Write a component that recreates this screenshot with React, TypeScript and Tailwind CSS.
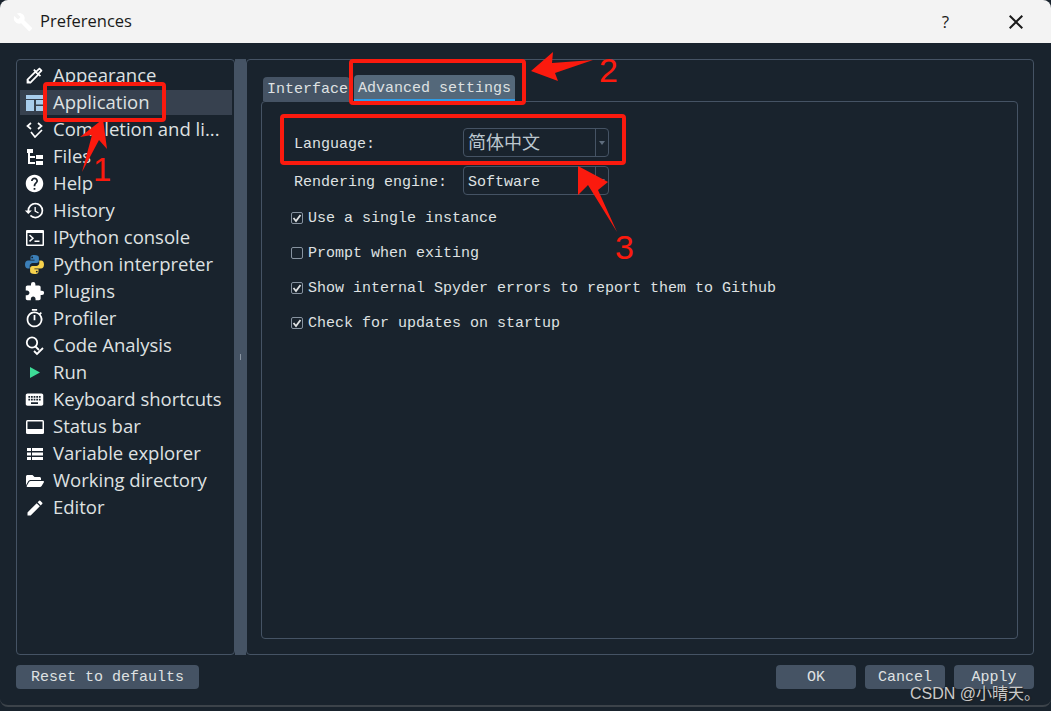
import type { ReactNode } from 'react'
import {
  MdOutlineColorize,
  MdHelp,
  MdHistory,
  MdExtension,
  MdOutlineTimer,
  MdKeyboard,
  MdEdit,
  MdClose,
} from 'react-icons/md'
import { FaFolderOpen } from 'react-icons/fa'

// Iconos a mano, los que el paquete no trae igual
const WrenchIcon = () => (
  <svg width="20" height="20" viewBox="0 0 24 24" fill="#ffffff">
    <path d="M22.7 19l-9.100-9.100c.9-2.300.4-5-1.500-6.900-2-2-5-2.400-7.400-1.300L9 6 6 9 1.600 4.700C.4 7.100.9 10.100 2.900 12.100c1.900 1.900 4.600 2.400 6.900 1.500l9.100 9.100c.4.400 1 .4 1.400 0l2.300-2.300c.5-.4.5-1.100.1-1.400z" />
  </svg>
)

const ApplicationIcon = () => (
  <svg width="18" height="16" viewBox="0 0 18 16" fill="#a9cdec">
    <rect x="0" y="0" width="18" height="4" />
    <rect x="0" y="5" width="8" height="11" />
    <rect x="10" y="5" width="8" height="4.5" />
    <rect x="10" y="11" width="8" height="5" />
  </svg>
)

const CompletionIcon = () => (
  <svg width="18" height="16" viewBox="0 0 18 16" fill="none" stroke="#fff" strokeWidth="1.7">
    <path d="M5 1 1.5 4 5 7" />
    <path d="M12 1 15.5 4 12 7" />
    <path d="M5 10 9 15 16 8" />
  </svg>
)

const FilesIcon = () => (
  <svg width="18" height="16" viewBox="0 0 18 16" fill="#fff">
    <rect x="1" y="0" width="6" height="4" />
    <rect x="2" y="4" width="2" height="11" />
    <rect x="2" y="7" width="7" height="2" />
    <rect x="2" y="13" width="7" height="2" />
    <rect x="10" y="6" width="7" height="4" />
    <rect x="10" y="12" width="7" height="4" />
  </svg>
)

const ConsoleIcon = () => (
  <svg width="18" height="16" viewBox="0 0 18 16">
    <rect x="0" y="0" width="18" height="16" rx="1" fill="#fff" />
    <rect x="1.5" y="3" width="15" height="11.5" fill="#19232d" />
    <path d="M3.5 5 7 8.2 3.5 11.4" fill="none" stroke="#fff" strokeWidth="1.5" />
    <rect x="8.5" y="10.5" width="5" height="1.5" fill="#fff" />
  </svg>
)

const PythonIcon = () => (
  <svg width="19" height="19" viewBox="0 0 19 19">
    <path d="M9.3 0C6 0 5.5 1.3 5.5 2.7V4.8H9.6V5.5H3C1.3 5.5 0 6.9 0 9.4c0 2.6 1.2 4 2.9 4H4.7v-2.3c0-1.6 1.4-3 3-3h3.9c1.3 0 2.3-1 2.3-2.3V2.7C13.900 1 12.500 0 9.300 0Z" fill="#3b7fb8" />
    <circle cx="7.200" cy="2.400" r=".9" fill="#19232d" />
    <path d="M9.700 19c3.300 0 3.800-1.300 3.800-2.700v-2.100H9.400v-.7H16c1.700 0 3-1.400 3-3.900 0-2.600-1.200-4-2.900-4H14.300v2.300c0 1.600-1.400 3-3 3H7.400c-1.300 0-2.300 1-2.300 2.300v3.100C5.100 18 6.500 19 9.700 19Z" fill="#f7d24c" />
    <circle cx="11.800" cy="16.600" r=".9" fill="#19232d" />
  </svg>
)

const AnalysisIcon = () => (
  <svg width="20" height="20" viewBox="0 0 20 20" fill="none" stroke="#fff" strokeWidth="1.8">
    <circle cx="7" cy="6.500" r="5.200" />
    <path d="M10.500 10.500 14 14" />
    <path d="M9 15 12 18 18 12" />
  </svg>
)

const RunIcon = () => (
  <svg width="12" height="13" viewBox="0 0 12 13" fill="#3ddc97">
    <path d="M1 1 11 6.500 1 12Z" />
  </svg>
)

const StatusIcon = () => (
  <svg width="18" height="14" viewBox="0 0 18 14">
    <rect x="0" y="0" width="18" height="14" rx="1.500" fill="#fff" />
    <rect x="1.500" y="1.500" width="15" height="7.500" fill="#19232d" />
  </svg>
)

const TableIcon = () => (
  <svg width="16" height="14" viewBox="0 0 16 14" fill="#fff">
    <rect x="0" y="1" width="4" height="3" />
    <rect x="5" y="1" width="11" height="3" />
    <rect x="0" y="5.500" width="4" height="3" />
    <rect x="5" y="5.500" width="11" height="3" />
    <rect x="0" y="10" width="4" height="3" />
    <rect x="5" y="10" width="11" height="3" />
  </svg>
)

const items: { label: string; icon: ReactNode; selected?: boolean }[] = [
  { label: 'Appearance', icon: <MdOutlineColorize size={21} color="#fff" /> },
  { label: 'Application', icon: <ApplicationIcon />, selected: true },
  { label: 'Completion and li...', icon: <CompletionIcon /> },
  { label: 'Files', icon: <FilesIcon /> },
  { label: 'Help', icon: <MdHelp size={21} color="#fff" /> },
  { label: 'History', icon: <MdHistory size={21} color="#fff" /> },
  { label: 'IPython console', icon: <ConsoleIcon /> },
  { label: 'Python interpreter', icon: <PythonIcon /> },
  { label: 'Plugins', icon: <MdExtension size={21} color="#fff" /> },
  { label: 'Profiler', icon: <MdOutlineTimer size={21} color="#fff" /> },
  { label: 'Code Analysis', icon: <AnalysisIcon /> },
  { label: 'Run', icon: <RunIcon /> },
  { label: 'Keyboard shortcuts', icon: <MdKeyboard size={21} color="#fff" /> },
  { label: 'Status bar', icon: <StatusIcon /> },
  { label: 'Variable explorer', icon: <TableIcon /> },
  { label: 'Working directory', icon: <FaFolderOpen size={18} color="#fff" /> },
  { label: 'Editor', icon: <MdEdit size={20} color="#fff" /> },
]

const checks = [
  { label: 'Use a single instance', on: true },
  { label: 'Prompt when exiting', on: false },
  { label: 'Show internal Spyder errors to report them to Github', on: true },
  { label: 'Check for updates on startup', on: true },
]

function Combo({ children }: { children: ReactNode }) {
  return (
    <div className="flex h-[29px] w-[146px] items-center rounded-[4px] border border-[#455364]">
      <div className="flex-1 pl-1">{children}</div>
      <div className="flex h-full w-[13px] items-center justify-center border-l border-[#455364]">
        <div className="h-0 w-0 border-x-[3px] border-t-[4px] border-x-transparent border-t-[#5f6d7d]" />
      </div>
    </div>
  )
}

function Button({ label, width }: { label: string; width: string }) {
  return (
    <button className={`flex h-6 items-center justify-center rounded-[4px] bg-[#455364] pt-[3px] text-[#dfe1e2] ${width}`}>
      {label}
    </button>
  )
}

// Flechas y recuadros rojos pintados encima de la captura
function Annotations() {
  return (
    <>
      <svg className="pointer-events-none absolute inset-0" width="1051" height="711" viewBox="0 0 1051 711">
        <g fill="none" stroke="#fb1a0e" strokeWidth="4">
          <rect x="45" y="84" width="119" height="36" rx="2" />
          <rect x="351" y="61" width="173" height="42" rx="2" />
          <rect x="282" y="116" width="342" height="47" rx="2" />
        </g>
        <g fill="#fb1a0e">
          <polygon points="103,119 80,137 92,135 82,172 99,140 107,149" />
          <polygon points="531,71 553,52 552,63 593,60 555,73 558,81" />
          <polygon points="578,166 608,182 598,190 617,232 588,185 578,195" />
        </g>
      </svg>
      <span className="absolute left-[93px] top-[150px] font-['Liberation_Sans',sans-serif] text-[33px] leading-[40px] text-[#fb1a0e]">1</span>
      <span className="absolute left-[599px] top-[50px] font-['Liberation_Sans',sans-serif] text-[34px] leading-[40px] text-[#fb1a0e]">2</span>
      <span className="absolute left-[615px] top-[227px] font-['Liberation_Sans',sans-serif] text-[34px] leading-[40px] text-[#fb1a0e]">3</span>
    </>
  )
}

export default function App() {
  return (
    <div className="relative h-[711px] w-[1051px] overflow-hidden bg-[#19232d] font-['Liberation_Mono','Noto_Sans_CJK_SC',monospace] text-[15px] text-[#dfe1e2]">
      {/* Ventana */}
      <div className="flex h-[707px] flex-col rounded-b-lg border-b-2 border-[#3c434a]">
        <header className="flex h-[43px] shrink-0 items-center rounded-t-lg bg-[#f3f3f3] pl-[13px] font-['Open_Sans',sans-serif] text-[#1a1a1a]">
          <WrenchIcon />
          <span className="ml-[7px] text-[16.5px]">Preferences</span>
          <span className="ml-auto text-[17px]">?</span>
          <MdClose size={24} className="ml-[55px] mr-[23px]" />
        </header>

        <div className="flex h-[612px] shrink-0 pl-4 pr-[17px] pt-4">
          {/* Lista de secciones */}
          <nav className="flex h-[596px] w-[219px] shrink-0 flex-col gap-[2px] rounded-[4px] border border-[#455364] pl-[3px] pr-[2px] pt-[3px] font-['Open_Sans',sans-serif] text-[18.5px]">
            {items.map((item) => (
              <div
                key={item.label}
                className={`flex h-[25px] items-center ${item.selected ? 'bg-[#37414f]' : ''}`}
              >
                <span className="flex w-[29px] shrink-0 justify-center">{item.icon}</span>
                <span className="ml-1 whitespace-nowrap pb-[2px]">{item.label}</span>
              </div>
            ))}
          </nav>

          {/* Separador */}
          <div className="flex h-[596px] w-[11px] shrink-0 items-center justify-center bg-[#455364]">
            <div className="h-[6px] w-px bg-[#8a96a3]" />
          </div>

          {/* Panel derecho */}
          <section className="flex h-[596px] flex-1 flex-col rounded-[4px] border border-[#455364] pb-[15px] pl-[14px] pr-[15px] pt-[15px]">
            <div className="ml-[2px] flex h-[26px] shrink-0 items-end">
              <div className="flex h-6 w-[87px] items-center rounded-t-[4px] bg-[#455364] pl-1 pt-[2px]">Interface</div>
              <div className="ml-[4px] flex h-[26px] w-[161px] items-center rounded-t-[4px] border-b-2 border-[#2f9ee8] bg-[#54687a] pl-1 pt-[4px]">
                Advanced settings
              </div>
            </div>
            <div className="flex flex-1 flex-col rounded-[4px] border border-[#455364] pl-[32px] pt-[26px]">
              <div className="flex items-center">
                <span className="w-[169px] pt-[6px]">Language:</span>
                <Combo><div className="pt-[3px] text-[18px] text-[#bcc7cf]">简体中文</div></Combo>
              </div>
              <div className="mt-[9px] flex items-center">
                <span className="w-[169px] pt-[6px]">Rendering engine:</span>
                <Combo><div className="pt-[6px]">Software</div></Combo>
              </div>
              <div className="-ml-[3px] mt-[14px] flex flex-col gap-[17px]">
                {checks.map((c) => (
                  <div key={c.label} className="flex h-[18px] items-center">
                    <span className="flex h-3 w-3 items-center justify-center rounded-[2px] border border-[#8793a0]">
                      {c.on && (
                        <svg width="10" height="10" viewBox="0 0 10 10" fill="none" stroke="#dfe1e2" strokeWidth="1.800">
                          <path d="M1.500 5 4 8 8.500 2" />
                        </svg>
                      )}
                    </span>
                    <span className="ml-[5px] pt-[2px]">{c.label}</span>
                  </div>
                ))}
              </div>
            </div>
          </section>
        </div>

        {/* Botones */}
        <footer className="mt-[10px] flex pl-4 pr-[17px]">
          <Button label="Reset to defaults" width="w-[183px]" />
          <div className="ml-auto flex gap-[9px]">
            <Button label="OK" width="w-20" />
            <Button label="Cancel" width="w-20" />
            <Button label="Apply" width="w-20" />
          </div>
        </footer>
      </div>

      <Annotations />

      {/* Marca de agua */}
      <span className="absolute left-[910px] top-[682px] whitespace-nowrap font-['Liberation_Sans','Noto_Sans_CJK_SC',sans-serif] text-[16px] text-[#c9c9c9] [text-shadow:1px_1px_1px_#222]">
        CSDN @小晴天。
      </span>
    </div>
  )
}
